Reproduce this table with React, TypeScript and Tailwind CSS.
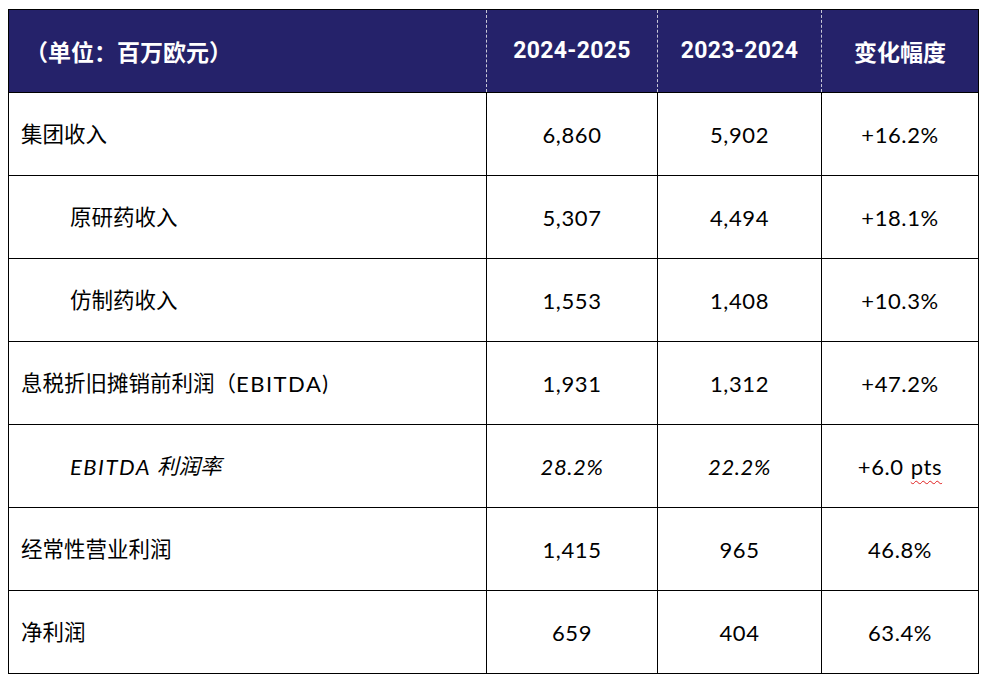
import React from "react";

type Row = { label: React.ReactNode; indent?: boolean; italic?: boolean; a: string; b: string; c: string; pts?: boolean };

const Lat = ({ children }: { children: React.ReactNode }) => (
  <span className="text-[22px] tracking-[1.5px]">{children}</span>
);

const rows: Row[] = [
  { label: "集团收入", a: "6,860", b: "5,902", c: "+16.2%" },
  { label: "原研药收入", indent: true, a: "5,307", b: "4,494", c: "+18.1%" },
  { label: "仿制药收入", indent: true, a: "1,553", b: "1,408", c: "+10.3%" },
  {
    label: (
      <>
        息税折旧摊销前利润（<Lat>EBITDA</Lat>)
      </>
    ),
    a: "1,931",
    b: "1,312",
    c: "+47.2%",
  },
  {
    label: (
      <>
        <Lat>EBITDA</Lat>
        <span className="ml-[6px]">利润率</span>
      </>
    ),
    indent: true,
    italic: true,
    a: "28.2%",
    b: "22.2%",
    c: "+6.0",
    pts: true,
  },
  { label: "经常性营业利润", a: "1,415", b: "965", c: "46.8%" },
  { label: "净利润", a: "659", b: "404", c: "63.4%" },
];

const bodyFont = { fontFamily: 'Lato, "Noto Sans CJK SC", sans-serif' };
const headFont = { fontFamily: 'Roboto, "Noto Sans CJK SC", sans-serif' };
const cjkFont = { fontFamily: '"Noto Sans CJK SC", sans-serif' };

export default function App() {
  return (
    <div className="w-[990px] h-[684px] bg-white pt-[9px] pl-[8px]">
      <div className="w-[971px] border border-black">
        <div className="flex h-[82px] bg-[#25226a] text-white font-bold text-[23px]" style={headFont}>
          <div className="w-[477px] flex items-center pl-[16px]">
            <span className="text-[23px]" style={cjkFont}>（单位：百万欧元）</span>
          </div>
          <div className="w-[171px] flex items-center justify-center border-l border-dashed border-[#c8c8d8] tracking-[0.3px]">2024-2025</div>
          <div className="w-[164px] flex items-center justify-center border-l border-dashed border-[#c8c8d8] tracking-[0.3px]">2023-2024</div>
          <div className="w-[157px] flex items-center justify-center border-l border-dashed border-[#c8c8d8]" style={cjkFont}>变化幅度</div>
        </div>
        {rows.map((r, i) => (
          <div key={i} className={`flex h-[83px] border-t border-black text-black ${r.italic ? "italic" : ""}`} style={bodyFont}>
            <div className={`w-[477px] flex items-center text-[21.5px] ${r.indent ? "pl-[61px]" : "pl-[12px]"}`}>{r.label}</div>
            <div className="w-[171px] flex items-center justify-center border-l border-black text-[22px] tracking-[0.6px]">{r.a}</div>
            <div className="w-[164px] flex items-center justify-center border-l border-black text-[22px] tracking-[0.6px]">{r.b}</div>
            <div className="w-[157px] flex items-center justify-center border-l border-black not-italic text-[22px] tracking-[0.6px]">
              {r.c}
              {r.pts && (
                <span className="ml-[7px] underline decoration-wavy decoration-[#e02020] decoration-1 underline-offset-[5px]">pts</span>
              )}
            </div>
          </div>
        ))}
      </div>
    </div>
  );
}
